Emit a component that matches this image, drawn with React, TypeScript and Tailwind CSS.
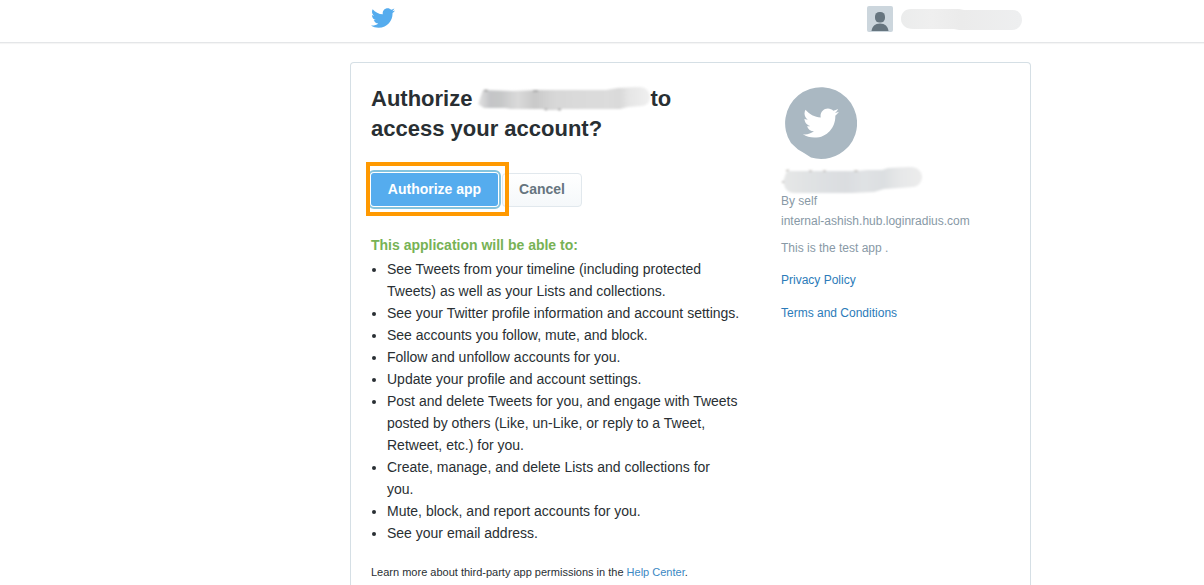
import { FaTwitter } from "react-icons/fa";

const permissions = [
  "See Tweets from your timeline (including protected Tweets) as well as your Lists and collections.",
  "See your Twitter profile information and account settings.",
  "See accounts you follow, mute, and block.",
  "Follow and unfollow accounts for you.",
  "Update your profile and account settings.",
  "Post and delete Tweets for you, and engage with Tweets posted by others (Like, un-Like, or reply to a Tweet, Retweet, etc.) for you.",
  "Create, manage, and delete Lists and collections for you.",
  "Mute, block, and report accounts for you.",
  "See your email address.",
];

function AccountSmudge() {
  return (
    <svg viewBox="0 0 122 21" className="h-[21px] w-[122px] overflow-visible" aria-hidden="true">
      <defs>
        <linearGradient id="account-smudge">
          <stop offset="0" stopColor="#ebecec" />
          <stop offset="0.25" stopColor="#efefef" />
          <stop offset="0.5" stopColor="#ebebeb" />
          <stop offset="1" stopColor="#eeeff0" />
        </linearGradient>
        <filter id="account-soft">
          <feGaussianBlur stdDeviation="0.6" />
        </filter>
      </defs>
      <path
        d="M10 0H58L63 1H112C118 1 121 6 121 11S117 21 111 21H58L53 20H12C5 20 0 16 0 10S4 0 10 0Z"
        fill="url(#account-smudge)"
        filter="url(#account-soft)"
      />
    </svg>
  );
}

function TitleSmudge() {
  return (
    <svg viewBox="0 0 172 24" className="h-6 w-[172px] overflow-visible" aria-hidden="true">
      <defs>
        <linearGradient id="title-smudge">
          <stop offset="0" stopColor="#e4e4e4" />
          <stop offset="0.07" stopColor="#c4c5c7" />
          <stop offset="0.13" stopColor="#c6c7c8" />
          <stop offset="0.23" stopColor="#dadada" />
          <stop offset="0.33" stopColor="#c9c9c9" />
          <stop offset="0.45" stopColor="#d8d8d8" />
          <stop offset="0.75" stopColor="#dcdcdc" />
          <stop offset="0.82" stopColor="#d9d9d9" />
          <stop offset="0.88" stopColor="#e6e6e6" />
          <stop offset="1" stopColor="#f0f0f0" />
        </linearGradient>
        <filter id="title-soft">
          <feGaussianBlur stdDeviation="0.8" />
        </filter>
      </defs>
      <g filter="url(#title-soft)">
        <path
          d="M5 3L35 4L60 3L128 3L140 1L160 0C169 0 172 5 172 10S169 19 163 19L150 20L142 22L84 22L82 23L67 23L64 22L33 22L27 21L6 21L0 17Z"
          fill="url(#title-smudge)"
        />
        <path d="M6 3.500H10M55 4H60M67 22.500H69M80 22.500H83" stroke="#9a9a9a" strokeWidth="1.500" />
      </g>
    </svg>
  );
}

function AppNameSmudge() {
  return (
    <svg viewBox="0 0 140 28" className="h-7 w-[140px] overflow-visible" aria-hidden="true">
      <defs>
        <linearGradient id="name-smudge">
          <stop offset="0" stopColor="#e6e7e7" />
          <stop offset="0.15" stopColor="#e1e3e4" />
          <stop offset="0.45" stopColor="#dadde0" />
          <stop offset="0.58" stopColor="#e0e2e4" />
          <stop offset="0.72" stopColor="#dcdfe1" />
          <stop offset="0.85" stopColor="#e7e8e9" />
          <stop offset="1" stopColor="#ececec" />
        </linearGradient>
        <filter id="name-soft">
          <feGaussianBlur stdDeviation="0.8" />
        </filter>
      </defs>
      <g filter="url(#name-soft)">
        <path
          d="M9 4L75 4L85 3L100 3L106 1L128 0C136 0 140 5 140 10S136 20 130 20L117 21L102 22L92 25L70 26L13 26C7 26 3 23 2 17L1 15L3 9C4 5 6 4 9 4Z"
          fill="url(#name-smudge)"
        />
        <path d="M4 4L7 3M27 4H30M41 4H44M72 4H76M1 14V16" stroke="#a9a49f" strokeWidth="1.200" />
      </g>
    </svg>
  );
}

function Avatar() {
  return (
    <svg viewBox="0 0 26 26" className="size-[26px]" role="img" aria-label="Profile">
      <rect width="26" height="26" rx="2" fill="#ccd6dd" />
      <rect x="8" y="6" width="10" height="10.500" rx="4.500" fill="#66757f" />
      <path d="M4.500 25C5 20.500 8 17.500 13 17.500S21 20.500 21.500 25Z" fill="#66757f" />
    </svg>
  );
}

function AppLogo() {
  return (
    <div className="relative flex size-[72px] items-center justify-center text-white">
      <svg viewBox="0 0 72 72" className="absolute inset-0 size-full" aria-hidden="true">
        <path d="M6 56A36 36 0 1 1 64 59L62 61A36 36 0 0 1 26 70.500L19 66L13 62.500Z" fill="#aab8c2" />
      </svg>
      <FaTwitter className="relative size-9" />
    </div>
  );
}

export default function App() {
  return (
    <div className="bg-white font-['Liberation_Sans',Arial,sans-serif] text-[#292f33]">
      <header className="border-b border-[#e4e6e8] pr-[173px] pl-[350px] shadow-[0_1px_1px_rgba(0,0,0,0.04)]">
        <div className="flex h-[42px] items-start justify-between pr-2 pl-[21px]">
          <a href="#home" aria-label="Twitter" className="pt-[6px] text-[#55acee]">
            <FaTwitter className="size-6" />
          </a>
          <div className="flex gap-2 pt-[6px]">
            <Avatar />
            <div className="pt-[3px]">
              <AccountSmudge />
            </div>
          </div>
        </div>
      </header>

      <div className="pt-[19px] pr-[173px] pl-[350px]">
        <main className="flex items-start rounded-t border border-b-0 border-[#d5dfe5] pl-5">
          <section className="w-[369px] shrink-0 pt-[21px] pb-2">
            <h1 className="text-[22px] leading-[30px] font-bold">
              <span className="flex items-center">
                Authorize
                <span className="pl-[6px]">
                  <TitleSmudge />
                </span>
                to
              </span>
              access your account?
            </h1>

            <div className="mt-[29px] flex">
              <div className="relative">
                <button
                  type="button"
                  className="h-[33px] w-[127px] rounded-[3px] bg-[#55acee] pb-[2px] text-sm font-bold text-white outline-2 outline-offset-1 outline-[#83c3de]"
                >
                  Authorize app
                </button>
                <div className="pointer-events-none absolute -top-[11px] -right-[11px] -bottom-[9px] -left-[5px] border-4 border-[#ff9900]" />
              </div>
              <button
                type="button"
                className="ml-1 h-[34px] w-20 rounded border border-[#e1e8ed] bg-linear-to-b from-white to-[#f5f8fa] pb-[2px] text-sm font-bold text-[#66757f]"
              >
                Cancel
              </button>
            </div>

            <h2 className="mt-[27px] text-sm leading-[22px] font-bold text-[#77b255]">
              This application will be able to:
            </h2>
            <ul className="mt-[2px] list-disc pl-4 text-sm leading-[22px]">
              {permissions.map((permission) => (
                <li key={permission}>{permission}</li>
              ))}
            </ul>
            <p className="mt-[19px] text-[11px] leading-[18px]">
              Learn more about third-party app permissions in the{" "}
              <a href="#help" className="text-[#3b88c3]">
                Help Center
              </a>
              .
            </p>
          </section>

          <aside className="min-w-0 flex-1 pt-6 pl-[41px] text-xs leading-5 text-[#8899a6]">
            <div className="ml-1">
              <AppLogo />
            </div>
            <div className="mt-2 pl-[1px]">
              <AppNameSmudge />
            </div>
            <p className="-mt-1">By self</p>
            <p>internal-ashish.hub.loginradius.com</p>
            <p className="mt-[7px]">This is the test app .</p>
            <p className="mt-3">
              <a href="#privacy" className="text-[#2b7bb9]">
                Privacy Policy
              </a>
            </p>
            <p className="mt-[13px]">
              <a href="#terms" className="text-[#2b7bb9]">
                Terms and Conditions
              </a>
            </p>
          </aside>
        </main>
      </div>
    </div>
  );
}
